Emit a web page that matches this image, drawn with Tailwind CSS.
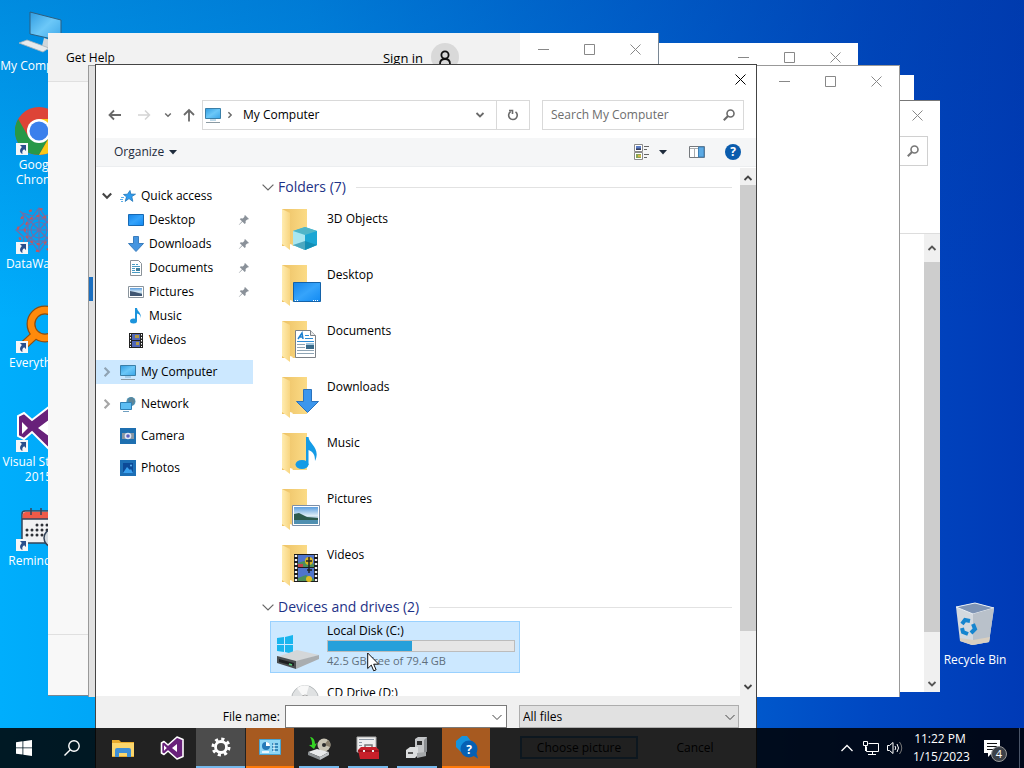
<!DOCTYPE html>
<html lang="en">
<head>
  <meta charset="UTF-8">
  <title>Desktop</title>
  <meta name="viewport" content="width=device-width, initial-scale=1.0">
  <script src="https://cdn.jsdelivr.net/npm/@tailwindcss/browser@4"></script>
</head>
<body class="h-screen overflow-hidden font-['Open_Sans','Noto_Sans',sans-serif] text-xs leading-4 text-black">

  <!-- Shared icons -->
  <svg class="absolute h-0 w-0">
    <defs>
      <linearGradient id="gBack" x1="0" x2="1"><stop offset="0" stop-color="#edc266"/><stop offset="1" stop-color="#fbdb86"/></linearGradient>
      <linearGradient id="gFlap" x1="0" x2="1"><stop offset="0" stop-color="#ffecb0"/><stop offset="1" stop-color="#f8d580"/></linearGradient>
      <linearGradient id="gScreen" x1="0" y1="0" x2="1" y2="1"><stop offset="0" stop-color="#2f9be0"/><stop offset=".5" stop-color="#6cc8f8"/><stop offset="1" stop-color="#3aa5e8"/></linearGradient>
      <linearGradient id="gDesk" x1="0" y1="0" x2="1" y2="1"><stop offset="0" stop-color="#1584e8"/><stop offset=".5" stop-color="#36a4fb"/><stop offset="1" stop-color="#1189f2"/></linearGradient>
      <linearGradient id="gSky" x1="0" y1="0" x2="0" y2="1"><stop offset="0" stop-color="#5b9ede"/><stop offset=".5" stop-color="#dcecf5"/><stop offset="1" stop-color="#2f6b93"/></linearGradient>
    </defs>
    <symbol id="folder" viewBox="0 0 40 42">
      <path d="M1 1h25v37H1z" fill="url(#gBack)"/>
      <path d="M1 1l8 4v37l-8-6z" fill="url(#gFlap)"/>
      <path d="M9 36l3 1-3 4z" fill="#fff"/>
    </symbol>
    <symbol id="pc" viewBox="0 0 16 16">
      <path d="M.5 1.500h15v10H.5z" fill="url(#gScreen)" stroke="#3a7fa8"/>
      <path d="M5 13h6" stroke="#7fb4d4"/>
      <path d="M1 15.500h14" stroke="#8b9aa3"/>
    </symbol>
    <symbol id="pin" viewBox="0 0 12 12">
      <path d="M7 1l4 4-1.200.6-.6-.2-1.600 1.600.1 2-1 1L4.500 7.800 1 11l-.2-.2L4 7.300 1.800 5.200l1-1 2 .2 1.700-1.700-.2-.8z" fill="#8a9199"/>
    </symbol>
    <symbol id="shortcut" viewBox="0 0 12 12">
      <path d="M0 0h12v12H0z" fill="#f4f6f8"/>
      <path d="M4 2h6v6L8.200 6.200C6.500 7 6 8.500 6.500 11 3.500 9.500 3.300 6.500 5.900 3.900z" fill="#2b4f8c"/>
    </symbol>
    <symbol id="chev" viewBox="0 0 10 10">
      <path d="M.5 3L5 7.500 9.500 3" fill="none" stroke="currentColor"/>
    </symbol>
    <symbol id="chevBold" viewBox="0 0 10 10">
      <path d="M1.500 3L5 6.500 8.500 3" fill="none" stroke="currentColor" stroke-width="1.800"/>
    </symbol>
    <symbol id="min" viewBox="0 0 11 11"><path d="M0 5.500h11" stroke="currentColor"/></symbol>
    <symbol id="max" viewBox="0 0 11 11"><path d="M.5.500h10v10H.5z" fill="none" stroke="currentColor"/></symbol>
    <symbol id="close" viewBox="0 0 11 11"><path d="M.5.500l10 10M10.500.500l-10 10" stroke="currentColor"/></symbol>
    <symbol id="search" viewBox="0 0 12 12">
      <circle cx="7.500" cy="4.500" r="3.500" fill="none" stroke="currentColor" stroke-width="1.600"/>
      <path d="M5 7L.8 11.200" stroke="currentColor" stroke-width="2"/>
    </symbol>
    <symbol id="vs" viewBox="0 0 24 24">
      <path d="M17 1l6 2.500v17L17 23l-9-8-4 3.500-2.500-1.500V7L4 5.500 8 9z" fill="#68217a" stroke="#fff" stroke-width="1.600" stroke-linejoin="round"/>
      <path d="M17 8v8l-5-4zM4 9.200v5.600L6.800 12z" fill="#fff"/>
    </symbol>
  </svg>

  <main class="relative h-full overflow-hidden bg-[linear-gradient(90deg,#00aefc_0%,#0096ee_30%,#0068d6_62%,#0048c2_85%,#003ab6_100%)]">
    <div class="absolute inset-x-0 top-0 h-80 bg-linear-to-b from-[#003c9c]/30 to-transparent"></div>

    <!-- Desktop icons -->
    <nav aria-label="Desktop icons" class="absolute left-0 top-2 flex w-[77px] flex-col text-center text-white">
      <a href="#" class="flex h-[99px] flex-col items-center">
        <svg class="h-12 w-12 shrink-0" viewBox="0 0 48 48">
          <path d="M15 4l31 8v21l-31-7z" fill="url(#gScreen)" stroke="#2d5f80"/>
          <path d="M29 30l6 2v5l8 3-10 2-6-4z" fill="#cfd6da"/>
          <path d="M4 35l8-3 22 8-6 4z" fill="#e6eaec" stroke="#a9b3b8" stroke-width=".8"/>
        </svg>
        <span class="mt-[2px] leading-[15px] whitespace-nowrap">My Computer</span>
      </a>
      <a href="#" class="flex h-[99px] flex-col items-center">
        <span class="relative h-12 w-12 shrink-0">
          <svg class="h-12 w-12" viewBox="0 0 48 48">
            <circle cx="24" cy="24" r="24" fill="#dd4437"/>
            <path d="M3.200 12A24 24 0 0 0 24 48l10.400-18H13.600z" fill="#279847"/>
            <path d="M24 48a24 24 0 0 0 20.800-36H24l10.400 18z" fill="#fbc919"/>
            <circle cx="24" cy="24" r="12" fill="#fff"/>
            <circle cx="24" cy="24" r="9.500" fill="#3b80ec"/>
          </svg>
          <svg class="absolute bottom-0 left-px h-3 w-3"><use href="#shortcut"/></svg>
        </span>
        <span class="mt-[2px] leading-[15px]">Google Chrome</span>
      </a>
      <a href="#" class="flex h-[99px] flex-col items-center">
        <span class="relative h-12 w-12 shrink-0">
          <svg class="h-12 w-12" viewBox="0 0 48 48" fill="none" stroke="#6f6fa8" stroke-width="1.200">
            <path d="M24 2l6 8 10-3-1 10 8 7-8 7 1 10-10-3-6 8-6-8-10 3 1-10-8-7 8-7L8 7l10 3z"/>
            <path d="M5 5l38 38M43 5L5 43M24 2v44M2 24h44"/>
            <path d="M13 13h22v22H13zM24 8l16 16-16 16L8 24z"/>
            <circle cx="24" cy="24" r="8"/><circle cx="24" cy="24" r="14" stroke="#c2565f" stroke-dasharray="3 4" stroke-width="2"/>
            <circle cx="24" cy="24" r="21" stroke="#c2565f" stroke-dasharray="3 8" stroke-width="2"/>
          </svg>
          <svg class="absolute bottom-0 left-px h-3 w-3"><use href="#shortcut"/></svg>
        </span>
        <span class="mt-[2px] leading-[15px]">DataWagon</span>
      </a>
      <a href="#" class="flex h-[99px] flex-col items-center">
        <span class="relative h-12 w-12 shrink-0">
          <svg class="h-12 w-12" viewBox="0 0 48 48" fill="none">
            <circle cx="30" cy="19" r="14" stroke="#8a4d12" stroke-width="9"/>
            <path d="M20 30L9 40" stroke="#8a4d12" stroke-width="9"/>
            <circle cx="30" cy="19" r="14" stroke="#ff8a0c" stroke-width="6.500"/>
            <path d="M21 29L8 41" stroke="#ff8a0c" stroke-width="6.500"/>
          </svg>
          <svg class="absolute bottom-0 left-px h-3 w-3"><use href="#shortcut"/></svg>
        </span>
        <span class="mt-[2px] leading-[15px]">Everything</span>
      </a>
      <a href="#" class="flex h-[99px] flex-col items-center">
        <span class="relative h-12 w-12 shrink-0">
          <svg class="h-12 w-12" viewBox="0 0 48 48">
            <path d="M34 3l12 5v32l-12 5-17-17-8 7-6-3V12l6-3 8 7z" fill="#68217a" stroke="#fff" stroke-width="2"/>
            <path d="M35 15v18L23 24zM7 18v12l6-6z" fill="#fff"/>
          </svg>
          <svg class="absolute bottom-0 left-px h-3 w-3"><use href="#shortcut"/></svg>
        </span>
        <span class="mt-[2px] leading-[15px]">Visual Studio 2015</span>
      </a>
      <a href="#" class="flex h-[99px] flex-col items-center">
        <span class="relative h-12 w-12 shrink-0">
          <svg class="h-12 w-12" viewBox="0 0 48 48">
            <rect x="7" y="8" width="40" height="32" rx="3" fill="#f1f1f3" stroke="#34445a" stroke-width="1.500"/>
            <path d="M7.800 16v-4q0-3 3-3H46v7z" fill="#ef5a48"/>
            <path d="M7 16h40M16 5v7M26 5v7M36 5v7" stroke="#34445a" stroke-width="1.500"/>
            <path d="M22 22h24M12 27h34M12 32h20" stroke="#2d3036" stroke-width="3" stroke-dasharray="0 5" stroke-linecap="round"/>
            <circle cx="38" cy="35" r="9" fill="#d5dbe0" stroke="#34445a" stroke-width="1.500"/>
          </svg>
          <svg class="absolute bottom-0 left-px h-3 w-3"><use href="#shortcut"/></svg>
        </span>
        <span class="mt-[2px] leading-[15px]">Reminders</span>
      </a>
    </nav>

    <a href="#" class="absolute right-3 top-[602px] flex w-[74px] flex-col items-center text-white">
      <svg class="h-12 w-12" viewBox="0 0 48 48">
        <path d="M5 5l19-4 19 5-5 34-17 3-12-4z" fill="#d3d9df"/>
        <path d="M5 5l19-4 19 5-21 6z" fill="#7e94b4" stroke="#e8eef4"/>
        <path d="M22 12l21-6-5 34-16 3z" fill="#b9c1ca"/>
        <path d="M9 36l13 2 17-3-1 5-17 3-12-4z" fill="#d9cfc0"/>
        <path d="M11 22l3-4 5 1M22 22l2 5-4 4M17 32l-5-2-1-4" fill="none" stroke="#1685cf" stroke-width="4"/>
      </svg>
      <span class="mt-[2px] whitespace-nowrap">Recycle Bin</span>
    </a>

    <!-- Get Help window -->
    <section class="absolute left-12 top-[33px] z-20 flex h-[663px] w-[611px] flex-col border-r border-b border-[#7a8794] bg-[#f8f8f8]">
      <header class="flex h-[49px] border-b border-[#e0e0e0] bg-[#f2f2f2]">
        <h2 class="pt-[17px] pl-[18px]">Get Help</h2>
        <div class="ml-auto flex gap-2 pt-[10px] pr-[61px]">
          <a href="#" class="pt-[7px] text-[13px]">Sign in</a>
          <span class="flex h-7 w-7 justify-center rounded-full bg-[#d9d9d9] pt-[7px]">
            <svg class="h-4 w-3" viewBox="0 0 12 16" fill="none" stroke="#111" stroke-width="1.800"><circle cx="6" cy="5" r="3.600"/><path d="M1 14c0-3 2-5 5-5s5 2 5 5"/></svg>
          </span>
        </div>
        <div class="flex h-8 bg-white text-[#888]">
          <button aria-label="Minimize" class="flex w-[46px] items-center justify-center"><svg class="h-[11px] w-[11px]"><use href="#min"/></svg></button>
          <button aria-label="Maximize" class="flex w-[46px] items-center justify-center"><svg class="h-[11px] w-[11px]"><use href="#max"/></svg></button>
          <button aria-label="Close" class="flex w-[46px] items-center justify-center"><svg class="h-[11px] w-[11px]"><use href="#close"/></svg></button>
        </div>
      </header>
      <div class="flex-1"></div>
      <footer class="h-[61px] border-t border-[#e0e0e0]"></footer>
    </section>

    <!-- Windows behind -->
    <section class="absolute left-[248px] top-[43px] z-10 flex h-[600px] w-[610px] justify-end bg-white text-[#888]">
      <div class="flex h-7">
        <button aria-label="Minimize" class="flex w-[46px] items-center justify-center"><svg class="h-[11px] w-[11px]"><use href="#min"/></svg></button>
        <button aria-label="Maximize" class="flex w-[46px] items-center justify-center"><svg class="h-[11px] w-[11px]"><use href="#max"/></svg></button>
        <button aria-label="Close" class="flex w-[46px] items-center justify-center"><svg class="h-[11px] w-[11px]"><use href="#close"/></svg></button>
      </div>
    </section>
    <section class="absolute left-[304px] top-[75px] h-[600px] w-[610px] bg-white"></section>
    <section class="absolute left-[330px] top-[100px] flex h-[592px] w-[610px] flex-col border-t border-[#777] bg-white">
      <div class="flex h-7 justify-end text-[#888]">
        <button aria-label="Close" class="flex w-[46px] items-center justify-center"><svg class="h-[11px] w-[11px]"><use href="#close"/></svg></button>
      </div>
      <div class="mt-[7px] mr-3 ml-auto flex h-[30px] w-[202px] items-center justify-end border border-[#d0d0d0] pr-2 text-[#777]">
        <svg class="h-3 w-3"><use href="#search"/></svg>
      </div>
      <div class="mt-[67px] flex flex-1 justify-end border-t border-[#ddd]">
        <div class="flex w-4 flex-col items-center bg-[#f0f0f0] text-[#555]">
          <svg class="my-[9px] h-[10px] w-[10px] rotate-180 scale-x-[-1]"><use href="#chevBold"/></svg>
          <div class="w-full flex-1 bg-[#cdcdcd]"></div>
          <svg class="mt-[47px] mb-[3px] h-[10px] w-[10px]"><use href="#chevBold"/></svg>
        </div>
      </div>
    </section>

    <section class="absolute left-[88px] top-[65px] z-30 flex h-[632px] w-[812px] justify-between border-x border-t border-[#999] bg-white">
      <div class="flex w-[7px] flex-col bg-[#e1e1e1]">
        <div class="mt-[211px] h-6 w-1 bg-[#1b6fc0]"></div>
      </div>
      <div class="flex h-[31px] text-[#888]">
        <button aria-label="Minimize" class="flex w-[46px] items-center justify-center"><svg class="h-[11px] w-[11px]"><use href="#min"/></svg></button>
        <button aria-label="Maximize" class="flex w-[46px] items-center justify-center"><svg class="h-[11px] w-[11px]"><use href="#max"/></svg></button>
        <button aria-label="Close" class="flex w-[46px] items-center justify-center"><svg class="h-[11px] w-[11px]"><use href="#close"/></svg></button>
      </div>
    </section>

    <!-- File picker dialog -->
    <section role="dialog" aria-label="Open" class="absolute bottom-0 left-[95px] top-16 z-40 flex w-[662px] flex-col border-x border-t border-[#444] bg-white">
      <div class="flex h-[35px] justify-end">
        <button aria-label="Close" class="flex h-7 w-[31px] items-center justify-center"><svg class="h-[11px] w-[11px]"><use href="#close"/></svg></button>
      </div>

      <div class="flex h-[30px] items-center pr-3 pl-3 text-[#6a6a6a]">
        <button aria-label="Back" class="w-[29px]"><svg class="h-[14px] w-[14px]" viewBox="0 0 14 14" fill="none" stroke="currentColor" stroke-width="1.800"><path d="M13 7H1.500M6 2.500L1.500 7 6 11.500"/></svg></button>
        <button aria-label="Forward" class="w-[27px] text-[#d4d4d4]"><svg class="h-[14px] w-[14px]" viewBox="0 0 14 14" fill="none" stroke="currentColor" stroke-width="1.500"><path d="M1 7h11.500M8 2.500L12.500 7 8 11.500"/></svg></button>
        <button aria-label="Recent locations" class="w-[18px]"><svg class="h-2 w-2"><use href="#chevBold"/></svg></button>
        <button aria-label="Up" class="w-5"><svg class="h-[14px] w-[14px]" viewBox="0 0 14 14" fill="none" stroke="currentColor" stroke-width="1.800"><path d="M7 13.500V2M2 7l5-5 5 5"/></svg></button>
        <div class="flex h-full flex-1 items-center border border-[#d9d9d9] pl-[2px]">
          <svg class="h-4 w-4"><use href="#pc"/></svg>
          <svg class="mx-[5px] h-2 w-2 -rotate-90"><use href="#chevBold"/></svg>
          <span class="ml-1 flex-1 text-black">My Computer</span>
          <button aria-label="Previous locations" class="flex h-full w-8 items-center justify-center"><svg class="h-[10px] w-[10px]"><use href="#chevBold"/></svg></button>
          <button aria-label="Refresh" class="flex h-full w-[33px] items-center justify-center border-l border-[#d9d9d9]">
            <svg class="h-3 w-3" viewBox="0 0 12 12" fill="none" stroke="currentColor" stroke-width="1.600"><path d="M8.500 2.800a4.300 4.300 0 1 1-4.800-.2M2 1.500h3.500V5"/></svg>
          </button>
        </div>
        <div class="ml-3 flex h-full w-[202px] items-center border border-[#d9d9d9] px-2">
          <input type="search" aria-label="Search My Computer" placeholder="Search My Computer" class="w-0 flex-1 outline-none placeholder:text-[#6d6d6d]">
          <svg class="h-3 w-3"><use href="#search"/></svg>
        </div>
      </div>

      <div class="mt-2 flex h-[29px] items-center border-b border-[#eceef0] bg-[#f5f6f7] pr-[15px] pl-[18px] text-[#1e2b3c]">
        <button class="flex items-center gap-[5px]">Organize <svg class="h-2 w-2" viewBox="0 0 8 8"><path d="M0 2h8L4 6.500z" fill="currentColor"/></svg></button>
        <button aria-label="Change view" class="ml-auto flex items-center gap-[9px]">
          <svg class="h-4 w-4" viewBox="0 0 16 16">
            <path d="M.5.500h8v7h-8zM.5 8.500h8v7h-8z" fill="#fff" stroke="#8a8a8a"/>
            <path d="M2 2h5v4H2z" fill="#5b7cc4"/><path d="M2 4.500h5V6H2z" fill="#333b5a"/><path d="M2 10h5v4H2z" fill="#86a455"/><path d="M4 11h3v2H4z" fill="#d9b64a"/>
            <path d="M10 2.500h5M10 5.500h3M10 10.500h5M10 13.500h3" stroke="#666"/>
          </svg>
          <svg class="h-2 w-2" viewBox="0 0 8 8"><path d="M0 2h8L4 6.500z" fill="currentColor"/></svg>
        </button>
        <button aria-label="Preview pane" class="ml-[22px]">
          <svg class="h-4 w-4" viewBox="0 0 16 16"><path d="M.5 2.500h15v11H.5z" fill="#fff" stroke="#75797d"/><path d="M1 4.500h14M5.500 5v8" stroke="#a9adb0"/><path d="M9.500 3H15v10H9.500z" fill="#5caae4" stroke="#3e7fb4"/></svg>
        </button>
        <button aria-label="Help" class="ml-5 h-4 w-4 rounded-full bg-[#0a5cad] text-center text-xs font-bold text-white">?</button>
      </div>

      <div class="flex min-h-0 flex-1 pt-px">
        <!-- Navigation pane -->
        <nav aria-label="Folders" class="w-[157px] shrink-0 pt-4">
          <a href="#" class="flex h-6 items-center pl-[5px]">
            <svg class="mr-[7px] h-3 w-3 text-[#444]"><use href="#chevBold"/></svg>
            <svg class="mr-[5px] h-4 w-4" viewBox="0 0 16 16"><path d="M10 2.500l.8 3.600 4.700.1-3.700 2.400 1 4.800-3.800-2.800-3.800 2.800 1.300-4.600L3.500 6.500l4-.3z" fill="#2f9df0" stroke="#2175b8" stroke-width=".8"/><path d="M1 9.500h3M0 11.500h3M1 13.500h2" stroke="#5aaeea"/></svg>
            Quick access
          </a>
          <a href="#" class="flex h-6 items-center gap-[5px] pr-[3px] pl-8">
            <svg class="h-4 w-4" viewBox="0 0 16 16"><path d="M.5 2.500h15v11H.5z" fill="url(#gDesk)" stroke="#1769b4"/></svg>
            Desktop<svg class="ml-auto h-3 w-3"><use href="#pin"/></svg>
          </a>
          <a href="#" class="flex h-6 items-center gap-[5px] pr-[3px] pl-8">
            <svg class="h-4 w-4" viewBox="0 0 16 16"><path d="M5.500.500h5v7h5L8 15.500.5 7.500h5z" fill="#4595e0" stroke="#3b7dbd"/></svg>
            Downloads<svg class="ml-auto h-3 w-3"><use href="#pin"/></svg>
          </a>
          <a href="#" class="flex h-6 items-center gap-[5px] pr-[3px] pl-8">
            <svg class="h-4 w-4" viewBox="0 0 16 16"><path d="M2.500.500h8l3 3v12h-11z" fill="#fff" stroke="#8a9299"/><path d="M4 4.500h3M8 4.500h2M4 6.500h8M4 8.500h3M4 10.500h3M4 12.500h8" stroke="#4a9cc4"/><path d="M8 8h4v3H8z" fill="#3d7f9e"/></svg>
            Documents<svg class="ml-auto h-3 w-3"><use href="#pin"/></svg>
          </a>
          <a href="#" class="flex h-6 items-center gap-[5px] pr-[3px] pl-8">
            <svg class="h-4 w-4" viewBox="0 0 16 16"><path d="M.5 2.500h15v11H.5z" fill="#fff" stroke="#8a949c"/><path d="M2 4h12v8H2z" fill="url(#gSky)"/><path d="M2 7l5 1 7 2v2H2z" fill="#3f5672"/></svg>
            Pictures<svg class="ml-auto h-3 w-3"><use href="#pin"/></svg>
          </a>
          <a href="#" class="flex h-6 items-center gap-[5px] pl-8">
            <svg class="h-4 w-4" viewBox="0 0 16 16" fill="#1c94dc"><ellipse cx="5.500" cy="13" rx="3.500" ry="2.500"/><path d="M7 0h2c0 3 5 5 3.500 10 0-3-1.500-4-3.500-4.500V13H7z"/></svg>
            Music
          </a>
          <a href="#" class="flex h-6 items-center gap-[5px] pl-8">
            <svg class="h-4 w-4" viewBox="0 0 16 16"><path d="M1 1h14v15H1z" fill="#222"/><path d="M4 2h8v6H4zM4 9h8v6H4z" fill="#5168b8"/><path d="M7 3h4v3H7zM8 10h3v3H8z" fill="#b39b45"/><path d="M2.500 2v13M13.500 2v13" stroke="#fff" stroke-dasharray="1.500 1.500"/></svg>
            Videos
          </a>
          <a href="#" aria-current="true" class="mt-2 flex h-6 items-center bg-[#cce8ff] pl-[5px]">
            <svg class="mr-[7px] h-3 w-3 -rotate-90 text-[#8fa3b3]"><use href="#chevBold"/></svg>
            <svg class="mr-[5px] h-4 w-4"><use href="#pc"/></svg>
            My Computer
          </a>
          <a href="#" class="mt-2 flex h-6 items-center pl-[5px]">
            <svg class="mr-[7px] h-3 w-3 -rotate-90 text-[#a6a6a6]"><use href="#chevBold"/></svg>
            <svg class="mr-[5px] h-4 w-4" viewBox="0 0 16 16"><circle cx="11" cy="5.500" r="4.500" fill="#4b94b8"/><path d="M8 3l4-2 3 4-2 4-4-2z" fill="#5f8597"/><path d="M.5 6.500h11v7H.5z" fill="#5cbdf3" stroke="#2f80b5"/><path d="M3 15.500h6" stroke="#6f9fc0"/></svg>
            Network
          </a>
          <a href="#" class="mt-2 flex h-6 items-center pl-6">
            <svg class="mr-[5px] h-4 w-4" viewBox="0 0 16 16"><path d="M0 0h16v16H0z" fill="#1e6fb0"/><path d="M2 5h12v6H2z" fill="#8a97a3"/><circle cx="8" cy="8" r="3.300" fill="#dfe6f5"/><circle cx="8" cy="8" r="1.800" fill="#5a5fc0"/></svg>
            Camera
          </a>
          <a href="#" class="mt-2 flex h-6 items-center pl-6">
            <svg class="mr-[5px] h-4 w-4" viewBox="0 0 16 16"><path d="M0 0h16v16H0z" fill="#1d6fb5"/><path d="M3 3h10v10H3z" fill="#0c4a98"/><path d="M3 13l4-6 3 3 1-1 2 4z" fill="#3aa0ee"/><circle cx="11" cy="5.500" r="1" fill="#5fb8f5"/></svg>
            Photos
          </a>
        </nav>

        <!-- File list -->
        <div class="min-w-0 flex-1 overflow-hidden pt-[5px] pl-[9px]">
          <h3 class="mr-2 flex h-7 items-center gap-1 text-sm text-[#1e3287]">
            <svg class="h-3 w-3 text-[#666]"><use href="#chev"/></svg>
            Folders (7) <span class="ml-[6px] h-px flex-1 bg-[#e2e2e2]"></span>
          </h3>
          <ul class="pl-[19px]">
            <li class="flex h-14 gap-[6px]">
              <span class="relative mt-[7px] h-[42px] w-10">
                <svg class="h-[42px] w-10"><use href="#folder"/></svg>
                <svg class="absolute top-[18px] left-3 h-6 w-6" viewBox="0 0 24 24"><path d="M12 1l12 4v14l-12 5-12-5V5z" fill="#3cc0dc"/><path d="M12 1l12 4-12 4L0 5z" fill="#4fb5c8"/><path d="M0 5l12 4v15L0 19z" fill="#a9e6f0"/><path d="M12 9l12-4v14l-12 5z" fill="#1ba6d4"/><path d="M0 19l12-4 12 4-12 5z" fill="#0f7fa0" opacity=".6"/></svg>
              </span>
              <a href="#" class="pt-[10px]">3D Objects</a>
            </li>
            <li class="flex h-14 gap-[6px]">
              <span class="relative mt-[7px] h-[42px] w-10">
                <svg class="h-[42px] w-10"><use href="#folder"/></svg>
                <svg class="absolute top-[18px] left-3 h-5 w-7" viewBox="0 0 28 20"><path d="M.5.500h27v19H.5z" fill="url(#gDesk)" stroke="#1462a8"/><path d="M2 18.500h3M20 18.500h6" stroke="#fff" stroke-dasharray="1 1"/></svg>
              </span>
              <a href="#" class="pt-[10px]">Desktop</a>
            </li>
            <li class="flex h-14 gap-[6px]">
              <span class="relative mt-[7px] h-[42px] w-10">
                <svg class="h-[42px] w-10"><use href="#folder"/></svg>
                <svg class="absolute top-[10px] left-[14px] h-7 w-[21px]" viewBox="0 0 21 28"><path d="M.5.500h15l5 5v22H.5z" fill="#fff" stroke="#7b8187"/><path d="M15.500.500v5h5" fill="#e8e8e8" stroke="#7b8187"/><path d="M3 9l4-6 1 6M4.500 7h3.500" fill="none" stroke="#1b7fd0" stroke-width="1.500"/><path d="M10 5.500h4M10 8.500h8M2 11.500h17" stroke="#2d8bd4"/><path d="M2 14.500h8M2 17.500h8M2 20.500h17M2 23.500h17" stroke="#8fa5b5"/><path d="M11 13h8v6h-8z" fill="#3a6b8a"/><path d="M11 13h8v2h-8z" fill="#9fc4dc"/></svg>
              </span>
              <a href="#" class="pt-[10px]">Documents</a>
            </li>
            <li class="flex h-14 gap-[6px]">
              <span class="relative mt-[7px] h-[42px] w-10">
                <svg class="h-[42px] w-10"><use href="#folder"/></svg>
                <svg class="absolute top-[13px] left-[15px] h-6 w-[23px]" viewBox="0 0 23 24"><path d="M7.500.500h8v12h7l-11 11-11-11h7z" fill="#3c96ec" stroke="#2a72bd"/></svg>
              </span>
              <a href="#" class="pt-[10px]">Downloads</a>
            </li>
            <li class="flex h-14 gap-[6px]">
              <span class="relative mt-[7px] h-[42px] w-10">
                <svg class="h-[42px] w-10"><use href="#folder"/></svg>
                <svg class="absolute top-[5px] left-[14px] h-8 w-[22px]" viewBox="0 0 22 32" fill="#149be6"><ellipse cx="7" cy="27.500" rx="6.500" ry="4.500"/><path d="M11 0h2.500C14 7 26 11 20 24c0-7-2-9-6.500-11v15H11z"/></svg>
              </span>
              <a href="#" class="pt-[10px]">Music</a>
            </li>
            <li class="flex h-14 gap-[6px]">
              <span class="relative mt-[7px] h-[42px] w-10">
                <svg class="h-[42px] w-10"><use href="#folder"/></svg>
                <svg class="absolute top-[17px] left-[11px] h-[21px] w-7" viewBox="0 0 28 21"><path d="M.5.500h27v20H.5z" fill="#fff" stroke="#7c8fa8"/><path d="M2 2h24v17H2z" fill="url(#gSky)"/><path d="M2 9l5-1 8 4 11 1v2H2z" fill="#2d5a4c"/><path d="M2 15h24v4H2z" fill="#4f8fb0"/></svg>
              </span>
              <a href="#" class="pt-[10px]">Pictures</a>
            </li>
            <li class="flex h-14 gap-[6px]">
              <span class="relative mt-[7px] h-[42px] w-10">
                <svg class="h-[42px] w-10"><use href="#folder"/></svg>
                <svg class="absolute top-[10px] left-[13px] h-7 w-6" viewBox="0 0 24 28"><path d="M0 0h24v28H0z" fill="#1c1c1c"/><path d="M4 1h16v12H4zM4 14h16v13H4z" fill="#4f74cc"/><path d="M4 9l6-2 10 3v3H4zM4 24l8-3 8 4v2H4z" fill="#4c8f5c"/><circle cx="15" cy="7" r="4" fill="#d8b51f"/><path d="M4 10h5v3H4z" fill="#c1454a"/><path d="M15 3v16M12 7h6M13 16h5" stroke="#222" stroke-width="1.500"/><circle cx="15" cy="25" r="3" fill="#e0bb22"/><path d="M2 1v27M22 1v27" stroke="#f4f4f4" stroke-width="2.400" stroke-dasharray="2 2"/></svg>
              </span>
              <a href="#" class="pt-[10px]">Videos</a>
            </li>
          </ul>

          <h3 class="mr-2 flex h-7 items-center gap-1 text-sm text-[#1e3287]">
            <svg class="h-3 w-3 text-[#666]"><use href="#chev"/></svg>
            Devices and drives (2) <span class="ml-[6px] h-px flex-1 bg-[#e2e2e2]"></span>
          </h3>
          <ul class="pl-2">
            <li class="flex h-[52px] w-[250px] gap-1 border border-[#99d1ff] bg-[#cce8ff] pr-1 pl-[6px]">
              <svg class="mt-[13px] h-9 w-[46px] shrink-0" viewBox="0 0 46 36">
                <path d="M0 3l7-1v7H0zM8 2l8-2v9H8zM0 10h7v7l-7-1zM8 10h8v9l-8-2z" fill="#19b5ee"/>
                <path d="M0 22l20-7 22 5-23 7z" fill="#d4d7d9"/>
                <path d="M0 21l19 5v8L0 28z" fill="#4a4d50"/>
                <path d="M2 24l15 4v3L2 27z" fill="#1d1f21"/>
                <path d="M19 26l23-6v4l-23 10z" fill="#a9adb0"/>
                <path d="M12 29l3 1" stroke="#58d07b" stroke-width="1.500"/>
              </svg>
              <div class="flex-1 pt-px">
                <a href="#">Local Disk (C:)</a>
                <div class="mt-px h-3 border border-[#bcbcbc] bg-[#e6e6e6]">
                  <div class="h-full bg-[#26a0da]" style="width: 45%"></div>
                </div>
                <p class="mt-px text-[11px] text-[#5f6f7c]">42.5 GB free of 79.4 GB</p>
              </div>
            </li>
            <li class="mt-3 flex h-[52px] w-[250px] gap-1 pl-[7px]">
              <svg class="h-9 w-[46px] shrink-0" viewBox="0 0 46 36"><circle cx="28" cy="14" r="13.500" fill="#dfe1e2" stroke="#b5b9bb"/><path d="M28 14L20 3a13 13 0 0 1 12-2z" fill="#f8f8f8"/><circle cx="28" cy="14" r="4" fill="#fff" stroke="#aaa"/></svg>
              <a href="#">CD Drive (D:)</a>
            </li>
          </ul>
        </div>

        <!-- Scrollbar -->
        <div class="flex w-4 shrink-0 flex-col items-center bg-[#f0f0f0] text-[#444]">
          <svg class="mt-[5px] mb-[2px] h-[10px] w-[10px] rotate-180"><use href="#chevBold"/></svg>
          <div class="w-full flex-1 bg-[#cdcdcd]"></div>
          <svg class="mt-[51px] mb-1 h-[10px] w-[10px]"><use href="#chevBold"/></svg>
        </div>
      </div>

      <form class="flex h-[72px] shrink-0 flex-col gap-2 bg-[#f0f0f0] pt-[9px] pr-[14px]">
        <div class="mr-[3px] flex h-[23px] items-center justify-end">
          <label for="fileName" class="mr-[5px]">File name:</label>
          <div class="flex h-full w-[222px] items-center border border-[#7a7a7a] bg-white pr-1">
            <input id="fileName" type="text" class="w-0 flex-1 px-1 outline-none">
            <button type="button" aria-label="Recent names"><svg class="h-[10px] w-[10px] text-[#444]"><use href="#chev"/></svg></button>
          </div>
          <div class="relative ml-3 h-full w-[220px]">
            <select aria-label="File type" class="h-full w-full appearance-none border border-[#adadad] bg-[#e1e1e1] px-[3px]">
              <option>All files</option>
            </select>
            <svg class="pointer-events-none absolute top-[7px] right-1 h-[10px] w-[10px] text-[#444]"><use href="#chev"/></svg>
          </div>
        </div>
        <div class="flex h-[23px] justify-end gap-[10px]">
          <button type="button" class="w-[118px] border-2 border-[#0078d7]/60 bg-[#e1e1e1]">Choose picture</button>
          <button type="button" class="w-[94px]">Cancel</button>
        </div>
      </form>
    </section>

    <!-- Mouse pointer -->
    <svg class="absolute top-[652px] left-[367px] z-50 h-5 w-[13px]" viewBox="0 0 13 20"><path d="M.7 1v15.500l3.600-3.400 2.400 5.700 2.400-1-2.400-5.600h5z" fill="#fff" stroke="#111"/></svg>

    <!-- Taskbar -->
    <footer class="absolute inset-x-0 bottom-0 z-50 flex h-10 bg-black/86 text-white">
      <button aria-label="Start" class="flex w-12 items-center justify-center">
        <svg class="h-4 w-4" viewBox="0 0 16 16" fill="#fff"><path d="M0 2.200l6.500-.9v6.200H0zM7.300 1.200L16 0v7.500H7.300zM0 8.300h6.500v6.300L0 13.700zM7.300 8.300H16V16l-8.700-1.300z"/></svg>
      </button>
      <button aria-label="Search" class="mr-[2px] flex w-12 items-center justify-center">
        <svg class="h-4 w-4" viewBox="0 0 16 16" fill="none" stroke="#fff" stroke-width="1.400"><circle cx="10" cy="6" r="5.200"/><path d="M6.300 9.700L.5 15.500"/></svg>
      </button>
      <button aria-label="File Explorer" class="flex w-[49px] items-center justify-center">
        <svg class="h-[18px] w-[22px]" viewBox="0 0 22 18"><path d="M0 1h7l2 2h13v15H0z" fill="#e8ab2e"/><path d="M0 4h22v13H0z" fill="#fbd66c"/><path d="M3 18v-7q0-2 2-2h12q2 0 2 2v7h-4v-4H7v4z" fill="#3f8fd6"/></svg>
      </button>
      <button aria-label="Visual Studio" class="flex w-[49px] items-center justify-center"><svg class="h-6 w-6"><use href="#vs"/></svg></button>
      <button aria-label="Settings" class="flex w-[49px] items-center justify-center border-b-2 border-[#76b9ed] bg-[#4c4c4c]">
        <svg class="h-5 w-5" viewBox="0 0 20 20" fill="none" stroke="#fff"><circle cx="10" cy="10" r="5.500" stroke-width="2.800"/><circle cx="10" cy="10" r="8" stroke-width="3" stroke-dasharray="3.140 3.140"/></svg>
      </button>
      <button aria-label="Control Panel" class="mr-px ml-px flex w-12 items-center justify-center border-b-2 border-[#ff7a0a] bg-[#a75a20]">
        <svg class="h-4 w-[22px]" viewBox="0 0 22 16"><path d="M.5.500h21v15H.5z" fill="#8fd6f5" stroke="#4aa3d0"/><circle cx="7" cy="7" r="4" fill="#2679b8"/><path d="M7 7V3a4 4 0 0 1 4 4z" fill="#fff"/><path d="M13 5h6M13 8h6M13 11h6" stroke="#1c6fa8" stroke-width="1.500"/><path d="M15 4v9" stroke="#fff"/><path d="M3 13h7" stroke="#e8f6fd" stroke-width="2"/></svg>
      </button>
      <button aria-label="Installer" class="relative flex w-12 items-center justify-center">
        <svg class="h-6 w-6" viewBox="0 0 24 24"><circle cx="17" cy="9" r="6.500" fill="#c9c4b4"/><path d="M17 9l4-5a6.500 6.500 0 0 1 2 7z" fill="#8a7f6c"/><circle cx="17" cy="9" r="2" fill="#2a2a2a"/><path d="M1 16l9-3 12 3-9 5z" fill="#e8eaeb"/><path d="M1 16l12 5v3L1 19z" fill="#8d9295"/><path d="M13 21l9-5v3l-9 5z" fill="#bcc0c3"/><path d="M3 1c3 0 5 3 5 7l2-1-3 6-5-4 3-.3C5 6 5 4 3 1z" fill="#35d424"/></svg>
        <span class="absolute inset-x-1 bottom-0 h-[2px] bg-[#76b9ed]"></span>
      </button>
      <button aria-label="Toolbox" class="relative ml-px flex w-12 items-center justify-center">
        <svg class="h-6 w-6" viewBox="0 0 24 24"><path d="M1 1h19v15H1z" fill="#eeeeee" stroke="#aaa"/><path d="M3 3.500h15M3 6.500h3M3 9.500h3" stroke="#8d98a5"/><path d="M2 14l3-3h15l3 3v9H4z" fill="#c8202a"/><path d="M2 15h21" stroke="#8c1018" stroke-width="1.500"/><path d="M9 11V9h7v2" fill="none" stroke="#777" stroke-width="1.500"/><path d="M7 14h2v2H7zM16 14h2v2h-2z" fill="#eee"/></svg>
        <span class="absolute inset-x-1 bottom-0 h-[2px] bg-[#76b9ed]"></span>
      </button>
      <button aria-label="Devices" class="relative ml-px flex w-12 items-center justify-center">
        <svg class="h-[22px] w-6" viewBox="0 0 24 22"><path d="M10 2l3-2h9v14l-3 3h-9z" fill="#c3c5c7"/><path d="M19 3l3-3v14l-3 3z" fill="#8b8e91"/><path d="M12 4h5v4h-5z" fill="#2c2c2c"/><path d="M1 13l4-3h8v8l-3 3H1z" fill="#dcdedf"/><path d="M3 15h5v2H3z" fill="#555"/><path d="M12 16l9-1v4l-9 2z" fill="#a5a8aa"/></svg>
        <span class="absolute inset-x-1 bottom-0 h-[2px] bg-[#76b9ed]"></span>
      </button>
      <button aria-label="Get Help" class="ml-px flex w-12 items-center justify-center border-b-2 border-[#ff7a0a] bg-[#a75a20]">
        <svg class="h-6 w-6" viewBox="0 0 24 24"><path d="M8 1h5l4 5-1 6-9 5-5-5V6z" fill="#1593dd"/><circle cx="15" cy="14" r="8.500" fill="#0560b4"/><path d="M18 20l6 3.500-2-7z" fill="#0560b4"/><text x="15" y="18.500" text-anchor="middle" font-size="12" font-weight="700" fill="#fff">?</text></svg>
      </button>

      <div class="ml-auto flex items-center">
        <button aria-label="Show hidden icons" class="mr-[10px]"><svg class="h-3 w-3" viewBox="0 0 12 12" fill="none" stroke="#fff" stroke-width="1.300"><path d="M.5 9L6 3.500 11.500 9"/></svg></button>
        <button aria-label="Network" class="mr-2"><svg class="h-4 w-4" viewBox="0 0 16 16" fill="none" stroke="#fff"><path d="M5.500 3.500h10v8H3.500v-5M9.500 12v3M5 14.500h8M.5 1.500h4v4h-4zM2.500 6v5"/></svg></button>
        <button aria-label="Volume" class="mr-[10px]"><svg class="h-4 w-4" viewBox="0 0 16 16" fill="none" stroke="#fff"><path d="M.5 5.500h2l3.500-3v11l-3.500-3h-2zM8 6q1.500 2 0 4M10 4q3 4 0 8"/><path d="M12.500 2q4.500 6 0 12" stroke="#777"/></svg></button>
        <time datetime="2023-01-15T23:22" class="w-[54px] text-center leading-[18px] whitespace-nowrap">11:22 PM<br>1/15/2023</time>
        <button aria-label="Notifications" class="relative mr-3 ml-4 h-6 w-6">
          <svg class="h-[18px] w-[18px]" viewBox="0 0 16 18"><path d="M0 1h16v13H8l-4 4v-4H0z" fill="#fff"/><path d="M3 4.500h10M3 7.500h10M3 10.500h7" stroke="#111"/></svg>
          <span class="absolute top-[10px] left-2 h-4 w-4 rounded-full border border-[#999] bg-[#3c4148] text-center text-[11px] leading-[14px]">4</span>
        </button>
        <span class="mr-1 h-10 w-px bg-[#4a5568]"></span>
      </div>
    </footer>
  </main>
</body>
</html>
